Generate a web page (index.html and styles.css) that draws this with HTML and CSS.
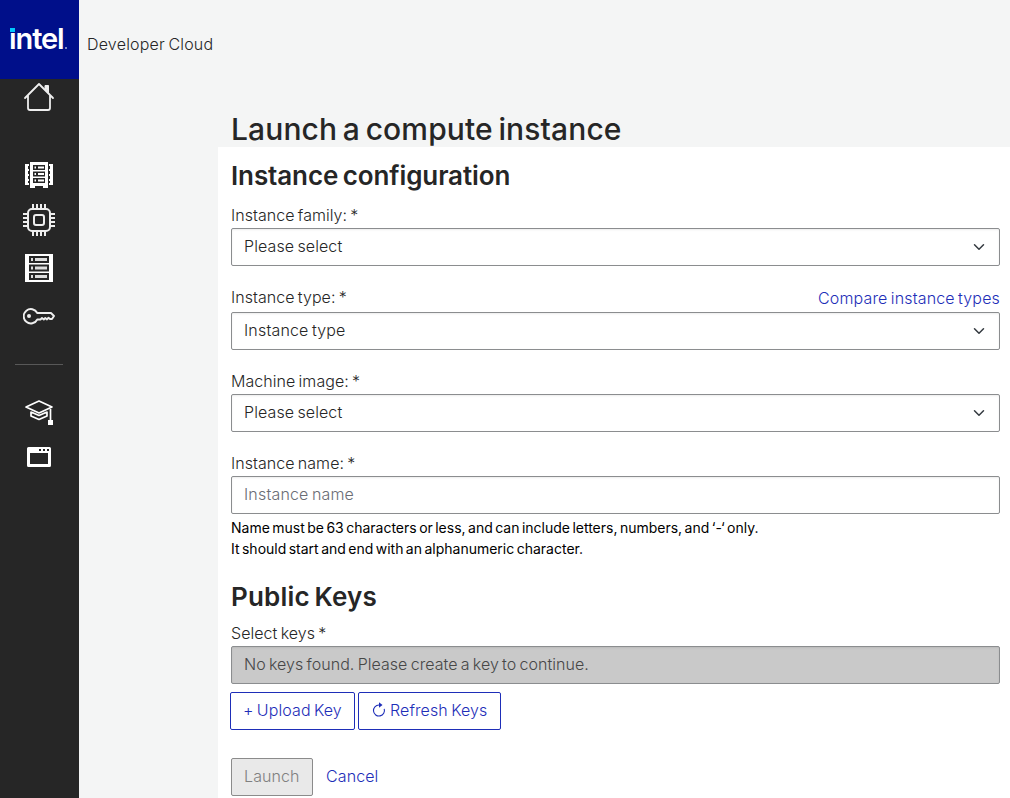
FILE: index.html
```
<!DOCTYPE html>
<html lang="en">
<head>
<meta charset="utf-8">
<title>Launch a compute instance</title>
<link rel="stylesheet" href="styles.css">
</head>
<body>
<div class="app">
  <nav class="sidebar">
    <a class="logo"><span class="logo-word">intel</span><span class="logo-dot"></span><span class="logo-mark"></span></a>
    <a class="nav-item home"><svg width="32" height="32" viewBox="0 0 32 32" fill="none" stroke="#eee" stroke-width="1.8" stroke-linejoin="round" stroke-linecap="round"><path d="M2 17 16 3l14 14M5 14v13q0 2 2 2h18q2 0 2-2V14"/><path d="M22 7.500V4.500h3.500v7z" fill="#eee" stroke-width="1"/></svg></a>
    <a class="nav-item servers"><svg width="32" height="32" viewBox="0 0 32 32"><path fill="#fff" d="M7 3h18v26h-5v-2h-8v2H7z"/><path fill="#fff" d="M2 5h4v2H5v3h1v2H5v3h1v2H5v3h1v2H5v2h1v2H2zM30 5h-4v2h1v3h-1v2h1v3h-1v2h1v3h-1v2h1v2h-1v2h4z"/><path fill="#262626" d="M10 6h12v5H10zM10 12.500h12v5H10zM10 19h12v5H10z"/><path fill="#fff" d="M11.500 7.500h1.500v2h-1.500zM15 7.500h6v2h-6zM11.500 14h1.500v2h-1.500zM15 14h6v2h-6zM11.500 20.500h1.500v2h-1.500zM15 20.500h6v2h-6z"/></svg></a>
    <a class="nav-item chip"><svg width="32" height="32" viewBox="0 0 32 32" fill="none" stroke="#eee" stroke-width="2"><rect x="5" y="5" width="22" height="22" rx="4"/><rect x="11" y="11" width="10" height="10" rx="2"/><path d="M10 0v5M14 0v5M18 0v5M22 0v5M10 27v5M14 27v5M18 27v5M22 27v5M0 10h5M0 14h5M0 18h5M0 22h5M27 10h5M27 14h5M27 18h5M27 22h5"/></svg></a>
    <a class="nav-item rack"><svg width="32" height="32" viewBox="0 0 32 32"><path fill="#fff" d="M2 2h28v28H2z"/><path fill="#262626" d="M6 4h20v7H6zM6 12.500h20v7H6zM6 21h20v7H6z"/><path fill="#ddd" d="M8 6h2v3H8zM12 6h12v3H12zM8 14.500h2v3H8zM12 14.500h12v3H12zM8 23h2v3H8zM12 23h12v3H12z"/></svg></a>
    <a class="nav-item key"><svg width="32" height="32" viewBox="0 0 32 32" fill="none" stroke="#eee" stroke-width="1.900" stroke-linejoin="round"><path d="M14.300 13H28l3 3-2 3h-2l-1.500-1.300L24 19.500 22.300 18l-1.500 1.500L19 18l-1.500 1.500H14.300A7.200 7.200 0 1 1 14.300 13z"/><circle cx="6" cy="16" r="2" fill="#eee" stroke="none"/></svg></a>
    <hr class="divider">
    <a class="nav-item learn"><svg width="32" height="32" viewBox="0 0 32 32" fill="none" stroke="#fff" stroke-width="1.700" stroke-linejoin="round"><path d="M3 11 16 5l13 6-13 6zM8 16l8 3.500 8-3.500M8 15.500v4.500l8 3.500 8-3.500v-4.500M27.500 11v14"/><path d="M25 24h5v5h-5z" fill="#fff" stroke="none"/></svg></a>
    <a class="nav-item console"><svg width="32" height="32" viewBox="0 0 32 32"><path fill="#fff" fill-rule="evenodd" d="M5.500 6h21q1.500 0 1.500 1.500v17q0 1.500-1.500 1.500h-21q-1.500 0-1.500-1.500v-17q0-1.500 1.500-1.500zM7 12v11h18V12z"/><path fill="#262626" d="M16 8h2v2h-2zM20 8h2v2h-2zM24 8h2v2h-2z"/></svg></a>
  </nav>
  <div class="page">
    <header class="topbar"><span>Developer Cloud</span></header>
    <main class="content">
      <h1 class="title">Launch a compute instance</h1>
      <form class="panel">
        <h2 class="section section-config">Instance configuration</h2>
        <div class="field family">
          <div class="label-row"><label>Instance family: *</label></div>
          <div class="control"><span>Please select</span><svg class="chevron" viewBox="0 0 16 16"><path d="m2 5 6 6 6-6"/></svg></div>
        </div>
        <div class="field type">
          <div class="label-row"><label>Instance type: *</label><a class="link compare">Compare instance types</a></div>
          <div class="control"><span>Instance type</span><svg class="chevron" viewBox="0 0 16 16"><path d="m2 5 6 6 6-6"/></svg></div>
        </div>
        <div class="field image">
          <div class="label-row"><label>Machine image: *</label></div>
          <div class="control"><span>Please select</span><svg class="chevron" viewBox="0 0 16 16"><path d="m2 5 6 6 6-6"/></svg></div>
        </div>
        <div class="field name">
          <div class="label-row"><label>Instance name: *</label></div>
          <div class="control placeholder"><span>Instance name</span></div>
        </div>
        <p class="help">Name must be 63 characters or less, and can include letters, numbers, and ‘-‘ only.<br>It should start and end with an alphanumeric character.</p>
        <h2 class="section section-keys">Public Keys</h2>
        <div class="field keys">
          <div class="label-row"><label>Select keys *</label></div>
          <div class="control disabled"><span>No keys found. Please create a key to continue.</span></div>
        </div>
        <div class="key-actions">
          <a class="btn upload">+ Upload Key</a>
          <a class="btn refresh"><svg class="refresh-icon" viewBox="0 0 16 16"><path fill="none" stroke="currentColor" stroke-width="1.100" d="M8 3a5.500 5.500 0 1 0 5.200 3.800"/><path fill="currentColor" d="M8 .3v5.400L11.500 3z"/></svg><span>Refresh Keys</span></a>
        </div>
        <div class="form-actions">
          <a class="btn launch">Launch</a>
          <a class="link cancel">Cancel</a>
        </div>
      </form>
    </main>
  </div>
</div>
</body>
</html>
```
FILE: styles.css
```
* { box-sizing: border-box; }
body {
  margin: 0;
  font: 300 16px/24px Inter, "Liberation Sans", sans-serif;
  letter-spacing: .1px;
  word-spacing: -1.3px;
  color: #262626;
  background: #f4f5f5;
}
.app { display: flex; height: 798px; overflow: hidden; }
.sidebar { width: 79px; flex: none; background: #262626; display: flex; flex-direction: column; align-items: flex-start; }
.logo { position: relative; width: 79px; height: 79px; flex: none; background: #000f8a; color: #fff; }
.logo-word { position: absolute; left: 9px; top: 20px; font: 600 29px/38px Inter, sans-serif; letter-spacing: -1.1px; }
.logo-dot { position: absolute; left: 10px; top: 28px; width: 5px; height: 4px; background: #00c7fd; box-shadow: 0 0 0 1px #000f8a; }
.logo-mark { position: absolute; left: 65px; top: 47px; width: 2px; height: 2px; background: #7f87c5; }
.nav-item { width: 32px; height: 32px; flex: none; margin-left: 23px; }
.nav-item svg { display: block; }
.home { margin-top: 2px; }
.servers { margin-top: 46px; }
.chip { margin-top: 13px; }
.rack { margin-top: 16px; }
.key { margin-top: 16px; }
.divider { width: 48px; height: 1px; flex: none; margin: 32px 0 0 15px; border: 0; background: #585858; }
.learn { margin-top: 31px; }
.console { margin-top: 13px; }
.page { flex: 1; min-width: 0; }
.topbar { height: 104px; padding: 32px 8px 0; letter-spacing: .2px; }
.content { margin-left: 139px; }
.title { margin: 0; height: 43px; padding: 4px 0 0 13px; font-size: 30px; line-height: 42px; font-weight: 550; letter-spacing: .13px; word-spacing: -2.5px; white-space: nowrap; }
.panel { height: 651px; background: #fff; padding: 10px 10px 0 13px; }
.section { margin: 0; font-size: 26px; line-height: 38px; font-weight: 600; letter-spacing: -.1px; word-spacing: -2px; }
.section-config { margin-bottom: 8px; }
.section-keys { margin-top: 19px; margin-bottom: 5px; letter-spacing: .18px; }
.label-row { display: flex; justify-content: space-between; height: 25px; letter-spacing: .05px; }
.type { margin-top: 19px; }
.type .label-row { height: 27px; }
.compare { padding-top: 1px; letter-spacing: .15px; }
.image, .name { margin-top: 19px; }
.control { display: flex; align-items: center; justify-content: space-between; height: 38px; padding: 0 12px 2px; border: 1px solid #8b8d8f; border-radius: 2px; box-shadow: inset 0 1px 2px rgba(0,0,0,.08); }
.type .control, .placeholder { letter-spacing: .17px; }
.placeholder { color: #6a6d75; }
.disabled { background: #c9c9c9; color: #474747; letter-spacing: .04px; }
.chevron { width: 16px; height: 12px; margin-top: 1px; fill: none; stroke: #343a40; stroke-width: 2; stroke-linecap: round; stroke-linejoin: round; }
.help { margin: 3px 0 0; font-size: 14px; line-height: 21px; color: #000; font-weight: 400; letter-spacing: 0; word-spacing: -1.5px; white-space: nowrap; }
.link { color: #1e2eb8; }
.key-actions { display: flex; gap: 3px; margin: 8px 0 0 -1px; }
.btn { display: flex; align-items: center; height: 38px; padding: 0 12px 2px; border: 1px solid #1e2eb8; border-radius: 2px; color: #1e2eb8; white-space: nowrap; }
.upload { width: 125px; }
.refresh { width: 143px; gap: 3px; }
.refresh-icon { width: 16px; height: 16px; }
.form-actions { display: flex; align-items: center; gap: 13px; margin-top: 28px; }
.launch { width: 82px; background: #e9e9e9; border-color: #8b8b8b; color: #808080; }
.cancel { padding-bottom: 2px; }
```
